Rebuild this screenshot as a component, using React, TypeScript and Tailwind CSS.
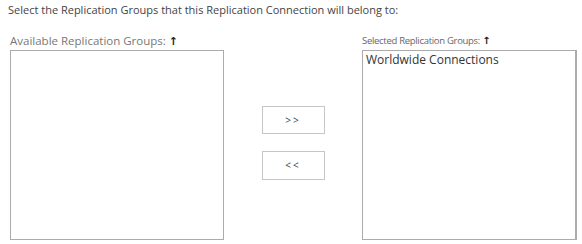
export default function App() {
  const font = { fontFamily: '"Segoe UI", "Open Sans", "Liberation Sans", sans-serif' };
  return (
    <div className="w-[582px] h-[244px] bg-white text-[#444]" style={font}>
      <p className="pl-[8px] pt-[2px] text-[11px] leading-[16px] text-[#444]">
        Select the Replication Groups that this Replication Connection will belong to:
      </p>
      <div className="flex mt-[14px]">
        {/* Available */}
        <div className="ml-[10px] w-[214px] flex flex-col">
          <div className="text-[11.5px] leading-[18px] text-[#777] h-[18px] whitespace-nowrap">
            Available Replication Groups:{' '}
            <span className="text-[#222] text-[11px] font-bold font-['DejaVu_Sans']">↑</span>
          </div>
          <div className="h-[190px] border border-[#ababab] bg-white" />
        </div>

        {/* Buttons */}
        <div className="w-[138px] flex flex-col items-center pt-[74px] gap-[17px]">
          <button className="w-[63px] h-[28px] border border-[#c6c6c6] bg-white text-[10px] tracking-[2px] text-[#444]">
            &gt;&gt;
          </button>
          <button className="w-[63px] h-[29px] border border-[#c6c6c6] bg-white text-[10px] tracking-[2px] text-[#444]">
            &lt;&lt;
          </button>
        </div>

        {/* Selected */}
        <div className="w-[215px] flex flex-col">
          <div className="text-[9.5px] tracking-[-0.3px] leading-[18px] text-[#666] h-[18px] whitespace-nowrap">
            Selected Replication Groups:{' '}
            <span className="text-[#222] text-[10px] font-bold font-['DejaVu_Sans']">↑</span>
          </div>
          <div className="h-[190px] border border-[#ababab] border-r-2 bg-white px-[3px]">
            <div className="text-[12px] leading-[17px] text-[#333]">Worldwide Connections</div>
          </div>
        </div>
      </div>
    </div>
  );
}
